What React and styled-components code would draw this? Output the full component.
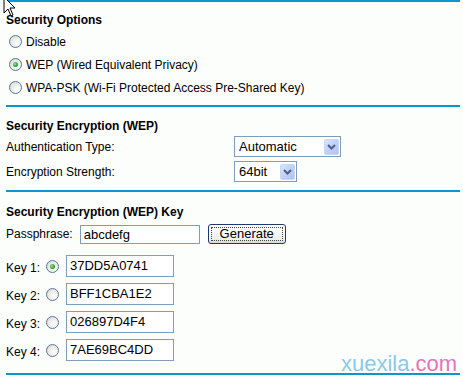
import React from "react";
import styled, { createGlobalStyle } from "styled-components";

const GlobalStyle = createGlobalStyle`
  html, body {
    margin: 0;
    padding: 0;
    background: #fcfefc;
  }
  body {
    font-family: "Liberation Sans", Arial, sans-serif;
    font-size: 12px;
    color: #000;
  }
`;

const Page = styled.div`
  position: relative;
  width: 463px;
  height: 379px;
  overflow: hidden;
  padding: 0 3px 0 6px;
  box-sizing: border-box;
`;

const Rule = styled.div`
  height: 2px;
  background: #0b97cd;
  margin-top: ${(p) => p.$top || 0}px;
`;

const Heading = styled.div`
  font-weight: bold;
  line-height: 14px;
  height: 14px;
  margin-top: ${(p) => p.$top}px;
`;

const OptionRow = styled.label`
  display: flex;
  align-items: center;
  gap: 4px;
  height: 23px;
  padding-left: 3px;
  line-height: 14px;
  &:first-of-type {
    margin-top: 3px;
  }
`;

const Radio = styled.span`
  display: inline-block;
  position: relative;
  width: 11px;
  height: 11px;
  border-radius: 50%;
  border: 1px solid #58769c;
  background: radial-gradient(circle at 65% 65%, #ffffff 0%, #eeeeea 45%, #d2d2cc 100%);
  flex: none;
  &::after {
    content: "";
    display: ${(p) => (p.$checked ? "block" : "none")};
    position: absolute;
    left: 3px;
    top: 3px;
    width: 5px;
    height: 5px;
    border-radius: 50%;
    background: radial-gradient(circle at 40% 40%, #9de39d 0%, #27a327 60%, #1a851a 100%);
  }
`;

const FieldRow = styled.div`
  display: flex;
  align-items: center;
  height: ${(p) => p.$h || 21}px;
  margin-top: ${(p) => p.$top || 0}px;
  line-height: 14px;
`;

const Label = styled.span`
  width: ${(p) => p.$w}px;
  flex: none;
`;

const Select = styled.div`
  display: flex;
  align-items: center;
  justify-content: space-between;
  box-sizing: border-box;
  width: ${(p) => p.$w}px;
  height: 21px;
  border: 1px solid #7f9db9;
  background: #fff;
  padding: 1px 1px 1px 4px;
  font-size: 13px;
`;

const DropButton = styled.span`
  display: flex;
  align-items: center;
  justify-content: center;
  width: 15px;
  height: 16px;
  border-radius: 2px;
  background: linear-gradient(135deg, #dbe5fd 0%, #c0d0f8 50%, #b2c3f2 100%);
  border: 1px solid #c7d5f6;
  box-sizing: border-box;
`;

const TextBox = styled.div`
  box-sizing: border-box;
  width: ${(p) => p.$w}px;
  height: ${(p) => p.$h || 21}px;
  border: 1px solid #7f9db9;
  background: #fff;
  padding: 0 3px;
  font-size: 13px;
  line-height: ${(p) => (p.$h || 21) - 2}px;
  margin-left: ${(p) => p.$left || 0}px;
`;

const Button = styled.div`
  box-sizing: border-box;
  width: 78px;
  height: 20px;
  margin-left: 8px;
  border: 1px solid #1c3a6e;
  border-radius: 3px;
  background: linear-gradient(#fefefe, #f0f0ea 80%, #d8d8d0);
  display: flex;
  align-items: center;
  justify-content: center;
  font-size: 13px;
  position: relative;
  &::after {
    content: "";
    position: absolute;
    inset: 2px;
    border: 1px dotted #444;
  }
`;

const KeyRow = styled.div`
  display: flex;
  align-items: center;
  height: 22px;
  margin-top: ${(p) => p.$top}px;
  line-height: 14px;
`;

const KeyLabel = styled.span`
  width: 40px;
  padding-top: 3px;
  flex: none;
`;

const Cursor = styled.svg`
  position: absolute;
  left: 3px;
  top: -4px;
`;

const Watermark = styled.div`
  position: absolute;
  left: 341px;
  top: 352px;
  font-family: Arial, "Liberation Sans", sans-serif;
  font-size: 22px;
  line-height: 24px;
  color: #7fc4e6;
  opacity: 0.9;
  span {
    color: #e466b6;
  }
`;

const Chevron = () => (
  <svg width="9" height="6" viewBox="0 0 9 6">
    <path d="M1 1 L4.5 4.5 L8 1" fill="none" stroke="#4d6185" strokeWidth="2" />
  </svg>
);

const options = [
  { text: "Disable" },
  { text: "WEP (Wired Equivalent Privacy)", checked: true },
  { text: "WPA-PSK (Wi-Fi Protected Access Pre-Shared Key)" },
];

const keys = ["37DD5A0741", "BFF1CBA1E2", "026897D4F4", "7AE69BC4DD"];

export default function App() {
  return (
    <>
      <GlobalStyle />
      <Page>
        <Rule />
        <Heading $top={11}>Security Options</Heading>
        {options.map((o) => (
          <OptionRow key={o.text}>
            <Radio $checked={o.checked} />
            {o.text}
          </OptionRow>
        ))}
        <Rule $top={6} />

        <Heading $top={12}>Security Encryption (WEP)</Heading>
        <FieldRow $top={3}>
          <Label $w={228}>Authentication Type:</Label>
          <Select $w={107}>
            Automatic
            <DropButton>
              <Chevron />
            </DropButton>
          </Select>
        </FieldRow>
        <FieldRow $top={4}>
          <Label $w={228}>Encryption Strength:</Label>
          <Select $w={63}>
            64bit
            <DropButton>
              <Chevron />
            </DropButton>
          </Select>
        </FieldRow>
        <Rule $top={8} />

        <Heading $top={13}>Security Encryption (WEP) Key</Heading>
        <FieldRow $top={5} $h={20}>
          <span>Passphrase:</span>
          <TextBox $w={120} $h={19} $left={7}>
            abcdefg
          </TextBox>
          <Button>Generate</Button>
        </FieldRow>
        {keys.map((k, i) => (
          <KeyRow key={k} $top={i === 0 ? 11 : 6}>
            <KeyLabel>Key {i + 1}:</KeyLabel>
            <Radio $checked={i === 0} />
            <TextBox $w={108} $h={22} $left={7}>
              {k}
            </TextBox>
          </KeyRow>
        ))}
        <Rule $top={12} />

        <Cursor width="14" height="22" viewBox="0 0 14 22">
          <path
            d="M1 1 L1 17 L5 13 L8 20 L10 19 L7 12 L12 12 Z"
            fill="#fff"
            stroke="#000"
            strokeWidth="1"
          />
        </Cursor>
        <Watermark>
          xuexila<span>.com</span>
        </Watermark>
      </Page>
    </>
  );
}
